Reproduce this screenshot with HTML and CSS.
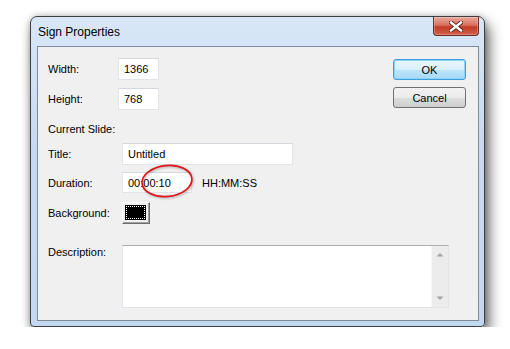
FILE: index.html
```html
<!DOCTYPE html>
<html lang="en">
<head>
    <meta charset="UTF-8">
    <title>Sign Properties</title>
    <link rel="stylesheet" href="styles.css">
</head>
<body>
    <div class="window">
        <div class="titlebar">
            <span class="title">Sign Properties</span>
            <div class="close">
                <svg width="14" height="11" viewBox="0 0 14 11">
                    <path d="M2 1.5 L12 9.5 M12 1.5 L2 9.5" stroke="#5a1d16" stroke-width="4.2" stroke-linecap="square"/>
                    <path d="M2 1.5 L12 9.5 M12 1.5 L2 9.5" stroke="#ffffff" stroke-width="2.4" stroke-linecap="square"/>
                </svg>
            </div>
        </div>
        <div class="client">
            <div class="top">
                <div class="sizes">
                    <div class="row row-size">
                        <label class="label short">Width:</label>
                        <div class="input small">1366</div>
                    </div>
                    <div class="row row-size gap8">
                        <label class="label short">Height:</label>
                        <div class="input small">768</div>
                    </div>
                </div>
                <div class="actions">
                    <button class="btn default">OK</button>
                    <button class="btn">Cancel</button>
                </div>
            </div>
            <div class="row row-text">
                <label class="label">Current Slide:</label>
            </div>
            <div class="row row-title">
                <label class="label">Title:</label>
                <div class="input wide">Untitled</div>
            </div>
            <div class="row row-duration">
                <label class="label">Duration:</label>
                <div class="duration">
                    <div class="input mid">00:00:10</div>
                    <svg class="circle" width="56" height="40" viewBox="0 0 56 40">
                        <ellipse cx="28" cy="20" rx="25" ry="15.5" fill="none" stroke="#e0141a" stroke-width="1.7" transform="rotate(-6 28 20)"/>
                    </svg>
                </div>
                <span class="hint">HH:MM:SS</span>
            </div>
            <div class="row row-bg">
                <label class="label">Background:</label>
                <div class="colorbtn"><div class="swatch"></div></div>
            </div>
            <div class="row row-desc">
                <label class="label top">Description:</label>
                <div class="textarea">
                    <div class="text"></div>
                    <div class="scrollbar">
                        <svg width="8" height="5" viewBox="0 0 8 5"><path d="M0.5 4.5 L4 1 L7.5 4.5 Z" fill="#a4a4a4"/></svg>
                        <svg width="8" height="5" viewBox="0 0 8 5"><path d="M0.5 0.5 L4 4 L7.5 0.5 Z" fill="#a4a4a4"/></svg>
                    </div>
                </div>
            </div>
        </div>
    </div>
</body>
</html>
```

FILE: styles.css
```css
html, body {
    margin: 0;
    padding: 0;
    background: #ffffff;
}

body {
    padding: 16px 0 0 30px;
    font-family: "Liberation Sans", Arial, sans-serif;
    font-size: 11px;
    color: #000000;
}

.window {
    box-sizing: border-box;
    width: 455px;
    height: 311px;
    border: 1px solid #3f3f3f;
    border-radius: 7px 7px 4px 4px;
    background: linear-gradient(#d9e7f7, #c6dbf3 40%, #c2d8f1);
    box-shadow: 4px 8px 14px rgba(0, 0, 0, 0.6), 0 0 6px rgba(0, 0, 0, 0.25);
    padding: 0 5px 5px 6px;
    display: flex;
    flex-direction: column;
}

.titlebar {
    height: 29px;
    display: flex;
    justify-content: space-between;
    align-items: center;
}

.title {
    padding-left: 1px;
    font-size: 12px;
    color: #000000;
}

.close {
    align-self: flex-start;
    box-sizing: border-box;
    width: 46px;
    height: 19px;
    border: 1px solid #6b2a22;
    border-top: none;
    border-radius: 0 0 4px 4px;
    background: linear-gradient(#e9a99c, #d8705f 45%, #c23c26 55%, #d0614a);
    box-shadow: inset 0 0 0 1px rgba(255, 255, 255, 0.25);
    display: flex;
    justify-content: center;
    align-items: center;
}

.client {
    flex: 1;
    border: 1px solid #7f8b97;
    background: #f0f0f0;
    padding: 11px 12px 0 10px;
    display: flex;
    flex-direction: column;
}

.top {
    display: flex;
    justify-content: space-between;
    align-items: flex-start;
}

.row {
    display: flex;
    align-items: center;
}

.label {
    width: 74px;
    flex-shrink: 0;
}

.label.short {
    width: 70px;
}

.label.top {
    align-self: flex-start;
    padding-top: 1px;
}

.row-size { height: 22px; }
.gap8 { margin-top: 8px; }
.row-text { height: 18px; margin-top: 10px; }
.row-title { height: 22px; margin-top: 5px; }
.row-duration { height: 21px; margin-top: 7px; }
.row-bg { height: 22px; margin-top: 9px; }
.row-desc { margin-top: 21px; align-items: flex-start; }

.input {
    box-sizing: border-box;
    height: 100%;
    border: 1px solid #e2e3ea;
    border-top-color: #d5d7de;
    background: #ffffff;
    padding: 0 5px;
    display: flex;
    align-items: center;
}

.input.small { width: 41px; }
.input.wide { width: 171px; }
.input.mid { width: 70px; }

.duration {
    position: relative;
    height: 100%;
}

.circle {
    position: absolute;
    left: 17px;
    top: -11px;
    filter: drop-shadow(1px 1px 1px rgba(0, 0, 0, 0.3));
}

.hint {
    margin-left: 10px;
}

.colorbtn {
    box-sizing: border-box;
    width: 28px;
    height: 22px;
    border: 1px solid;
    border-color: #ffffff #6d6d6d #6d6d6d #ffffff;
    box-shadow: inset -1px -1px 0 #a0a0a0;
    background: #f0f0f0;
    padding: 3px 4px 4px 3px;
}

.swatch {
    box-sizing: border-box;
    width: 100%;
    height: 100%;
    background: #000000;
    border: 1px dotted #ffffff;
    outline: 1px solid #000000;
}

.textarea {
    box-sizing: border-box;
    width: 327px;
    height: 63px;
    border: 1px solid #e2e3ea;
    border-top-color: #abadb3;
    background: #ffffff;
    display: flex;
}

.text {
    flex: 1;
}

.scrollbar {
    width: 16px;
    background: #ececec;
    border-left: 1px solid #f6f6f6;
    display: flex;
    flex-direction: column;
    justify-content: space-between;
    align-items: center;
    padding: 6px 0 6px;
}

.actions {
    margin-top: 1px;
    display: flex;
    flex-direction: column;
    gap: 7px;
}

.btn {
    box-sizing: border-box;
    width: 73px;
    height: 21px;
    border: 1px solid #707070;
    border-radius: 3px;
    background: linear-gradient(#f2f2f2 0%, #ebebeb 50%, #dddddd 51%, #cfcfcf 100%);
    font-family: "Liberation Sans", Arial, sans-serif;
    font-size: 11px;
    color: #000000;
    padding: 0;
}

.btn.default {
    border-color: #3c9ee0;
    background: linear-gradient(#eaf6fd 0%, #d9f0fc 50%, #bee6fd 51%, #a7d9f5 100%);
    box-shadow: inset 0 0 0 1px #8fd3f8;
}
```
